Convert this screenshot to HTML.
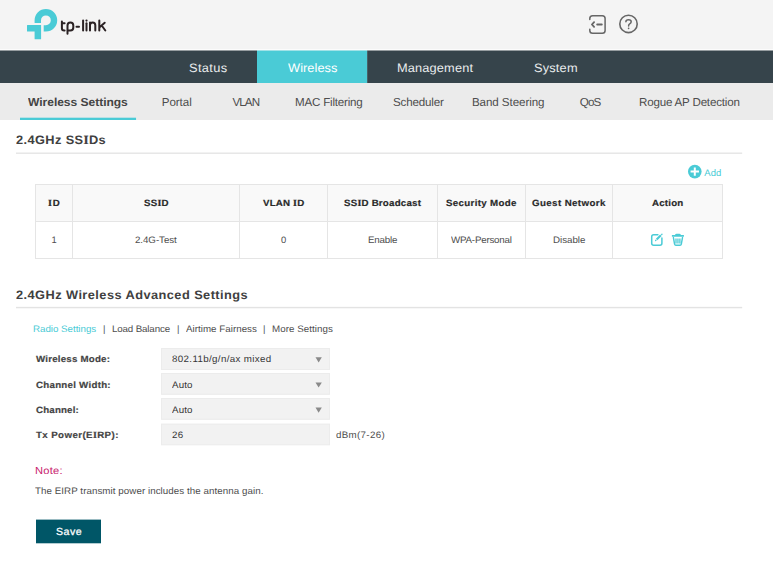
<!DOCTYPE html>
<html lang="en">
<head>
<meta charset="utf-8">
<title>tp-link</title>
<style>
html,body{margin:0;padding:0;}
body{width:773px;height:565px;position:relative;overflow:hidden;background:#fff;font-family:"Liberation Sans",sans-serif;text-rendering:geometricPrecision;}
.a{position:absolute;}
.t{position:absolute;white-space:nowrap;line-height:1;transform-origin:0 50%;}
.t i{font-style:normal;font-family:"Liberation Serif",serif;font-size:103%;-webkit-text-stroke:0.2px currentColor;}
#tbl{left:35px;top:184px;width:686px;height:73px;border:1px solid #e5e5e5;background:#fff;box-sizing:content-box;}
#thead{left:36px;top:185px;width:686px;height:36px;background:#f9f9f9;}
#trow{left:36px;top:221px;width:686px;height:1px;background:#e5e5e5;}
.vd{top:185px;width:1px;height:73px;background:#e5e5e5;}
</style>
</head>
<body>
<svg class="a" style="left:0;top:0" width="773" height="565" viewBox="0 0 773 565">
  <rect x="0" y="0" width="773" height="50.5" fill="#f4f4f4"/>
  <rect x="0" y="49.1" width="773" height="1" fill="#fdfdfd"/>
  <rect x="0" y="50.5" width="257" height="32.5" fill="#36444b"/>
  <rect x="367.1" y="50.5" width="405.9" height="32.5" fill="#36444b"/>
  <rect x="257" y="50.5" width="110.1" height="32.5" fill="#4acbd6"/>
  <rect x="0" y="83" width="773" height="37" fill="#ebebeb"/>
  <rect x="20" y="117.7" width="116.05" height="2.3" fill="#4acbd6"/>
  <rect x="16" y="152.55" width="726.2" height="1.3" fill="#e3e3e3"/>
  <rect x="16" y="306.85" width="726.2" height="1.45" fill="#e3e3e3"/>
  <g fill="#f2f2f2" stroke="#ececec" stroke-width="1">
    <rect x="161.5" y="348.5" width="168" height="21"/>
    <rect x="161.5" y="373.5" width="168" height="20.8"/>
    <rect x="161.5" y="398.5" width="168" height="20.8"/>
    <rect x="161.5" y="424.1" width="168" height="20.7"/>
  </g>
  <g fill="#8a8a8a">
    <path d="M315.5 357.2 H321.8 L318.65 362.4 Z"/>
    <path d="M315.5 382.4 H321.8 L318.65 387.6 Z"/>
    <path d="M315.5 407.6 H321.8 L318.65 412.8 Z"/>
  </g>
  <rect x="36" y="519.6" width="65" height="23.7" fill="#005667"/>
</svg>

<!-- logo mark -->
<svg class="a" style="left:0;top:0" width="120" height="50" viewBox="0 0 120 50">
  <g fill="#4acbd6">
    <path d="M34.6 22.9 V20.3 A11.3 11.3 0 1 1 45.9 31.6 H43.7 V25.2 H45.9 A4.9 4.9 0 1 0 41 20.3 V22.9 Z"/>
    <path d="M27.5 25.1 H41.1 V38.8 Q41.1 39.3 40.6 39.3 H35.1 Q34.6 39.3 34.6 38.8 V31.6 H27.5 Q27 31.6 27 31.1 V25.6 Q27 25.1 27.5 25.1 Z"/>
  </g>
  <g fill="none" stroke="#2b2224" stroke-width="2" stroke-linecap="round" stroke-linejoin="round">
    <path d="M61.9 21.6 V28.2 Q61.9 30.5 64.2 30.5 H64.6 M61.9 23.2 H64.6"/>
    <path d="M67.5 33.8 V25.5 Q67.5 22.5 70.4 22.5 Q73.3 22.5 73.3 25.5 V27.5 Q73.3 30.5 70.4 30.5 H67.8"/>
    <path d="M76.5 26.7 H79"/>
    <path d="M83.1 20.6 V30.5"/>
    <path d="M86.5 23.3 V30.5"/>
    <path d="M90 22.6 V30.5 M90 25.3 Q90 22.5 92.65 22.5 Q95.3 22.5 95.3 25.3 V30.5"/>
    <path d="M99.3 20.6 V30.5 M99.9 26.9 L104.7 22.7 M101.7 25.5 L105.3 30.5"/>
  </g>
  <circle cx="86.5" cy="20.6" r="1.1" fill="#2b2224"/>
</svg>

<!-- header icons -->
<svg class="a" style="left:580px;top:5px" width="70" height="40" viewBox="580 5 70 40" fill="none" stroke="#666" stroke-width="1.5" stroke-linecap="round" stroke-linejoin="round">
  <path d="M589.8 19.5 V18.6 Q589.8 15.8 592.6 15.8 H602.3 Q605.1 15.8 605.1 18.6 V30.5 Q605.1 33.3 602.3 33.3 H592.6 Q589.8 33.3 589.8 30.5 V29.3"/>
  <path d="M594.1 22.1 L591.9 24.5 L594.1 26.9" stroke-width="1.8"/>
  <path d="M597.2 24.5 H601.8" stroke-width="1.9"/>
  <circle cx="628.5" cy="23.9" r="8.7" stroke-width="1.6"/>
  <path d="M625.9 21.8 Q625.9 19.8 628.5 19.8 Q631.2 19.8 631.2 21.8 Q631.2 23 629.7 23.8 Q628.6 24.4 628.6 25.9" stroke-width="1.5"/>
  <circle cx="628.6" cy="28.3" r="0.85" fill="#666" stroke="none"/>
</svg>


<!-- table -->
<div class="a" id="tbl"></div>
<div class="a" id="thead"></div>
<div class="a" id="trow"></div>
<div class="a vd" style="left:72px"></div>
<div class="a vd" style="left:239px"></div>
<div class="a vd" style="left:327px"></div>
<div class="a vd" style="left:437px"></div>
<div class="a vd" style="left:525px"></div>
<div class="a vd" style="left:612.4px"></div>

<!-- add / action icons -->
<svg class="a" style="left:640px;top:160px" width="100" height="95" viewBox="640 160 100 95">
  <circle cx="694.8" cy="171.6" r="6.8" fill="#4acbd6"/>
  <path d="M690.6 171.6 H699 M694.8 167.4 V175.8" stroke="#fff" stroke-width="2" fill="none"/>
  <g fill="none" stroke="#4acbd6" stroke-width="1.4" stroke-linecap="round" stroke-linejoin="round">
    <path d="M657.9 234.7 H653.7 Q651.7 234.7 651.7 236.7 V243.2 Q651.7 245.2 653.7 245.2 H659.9 Q661.9 245.2 661.9 243.2 V238" stroke-width="1.5"/>
    <path d="M656.6 239.6 L660.9 235.3" stroke-width="2.1" stroke-linecap="butt"/>
    <path d="M655.6 240.6 L655.9 240.3 M661.7 234.5 L662 234.2" stroke-width="1.3"/>
    <path d="M673.4 237.6 L674.6 244.2 Q674.8 245.3 675.9 245.3 H680 Q681.1 245.3 681.3 244.2 L682.5 237.6" stroke-width="1.45"/>
    <path d="M676 238.6 V243.4 M677.95 238.6 V243.4 M679.9 238.6 V243.4" stroke-width="1.3" stroke-linecap="butt"/>
  </g>
  <path d="M671.9 235.1 H675 Q675.3 233.8 676.6 233.8 H679.3 Q680.6 233.8 680.9 235.1 H683.9 V236.8 H671.9 Z" fill="#4acbd6"/>
</svg>

<!-- form boxes -->


<span class="t" id="t0" style="left:188.99px;top:62.37px;font-size:12.2px;color:#e9eced;letter-spacing:0.339px;transform:scaleX(1.05);">Status</span>
<span class="t" id="t1" style="left:287.79px;top:62.37px;font-size:12.2px;color:#ffffff;letter-spacing:0.054px;transform:scaleX(1.05);">Wireless</span>
<span class="t" id="t2" style="left:397.49px;top:62.37px;font-size:12.2px;color:#e9eced;letter-spacing:0.134px;transform:scaleX(1.05);">Management</span>
<span class="t" id="t3" style="left:534.19px;top:62.37px;font-size:12.2px;color:#e9eced;letter-spacing:0.171px;transform:scaleX(1.05);">System</span>
<span class="t" id="t4" style="left:28.02px;top:97.18px;font-size:11.6px;color:#444;font-weight:700;letter-spacing:-0.035px;transform:scaleX(1.04);">Wireless Settings</span>
<span class="t" id="t5" style="left:161.74px;top:97.18px;font-size:11.6px;color:#4d4d4d;letter-spacing:-0.060px;">Portal</span>
<span class="t" id="t6" style="left:232.44px;top:97.18px;font-size:11.6px;color:#4d4d4d;letter-spacing:-0.900px;">VLAN</span>
<span class="t" id="t7" style="left:295.04px;top:97.18px;font-size:11.6px;color:#4d4d4d;letter-spacing:-0.212px;">MAC Filtering</span>
<span class="t" id="t8" style="left:393.04px;top:97.18px;font-size:11.6px;color:#4d4d4d;letter-spacing:-0.178px;">Scheduler</span>
<span class="t" id="t9" style="left:471.94px;top:97.18px;font-size:11.6px;color:#4d4d4d;letter-spacing:-0.074px;">Band Steering</span>
<span class="t" id="t10" style="left:579.74px;top:97.18px;font-size:11.6px;color:#4d4d4d;letter-spacing:-0.854px;">QoS</span>
<span class="t" id="t11" style="left:639.04px;top:97.18px;font-size:11.6px;color:#4d4d4d;letter-spacing:-0.200px;">Rogue AP Detection</span>
<span class="t" id="t12" style="left:16.09px;top:133.97px;font-size:12.2px;color:#404040;font-weight:700;letter-spacing:0.367px;transform:scaleX(1.05);">2.4GHz SS<i>I</i>Ds</span>
<span class="t" id="t13" style="left:704.22px;top:169.46px;font-size:9.5px;color:#4acbd6;letter-spacing:0.082px;">Add</span>
<span class="t" id="t14" style="left:48.41px;top:198.80px;font-size:9.1px;color:#2a2a2a;font-weight:700;letter-spacing:0.685px;transform:scaleX(1.07);-webkit-text-stroke:0.18px #2a2a2a;"><i>I</i>D</span>
<span class="t" id="t15" style="left:143.61px;top:198.80px;font-size:9.1px;color:#2a2a2a;font-weight:700;letter-spacing:0.231px;transform:scaleX(1.07);-webkit-text-stroke:0.18px #2a2a2a;">SS<i>I</i>D</span>
<span class="t" id="t16" style="left:262.91px;top:198.80px;font-size:9.1px;color:#2a2a2a;font-weight:700;letter-spacing:0.162px;transform:scaleX(1.07);-webkit-text-stroke:0.18px #2a2a2a;">VLAN <i>I</i>D</span>
<span class="t" id="t17" style="left:343.61px;top:198.80px;font-size:9.1px;color:#2a2a2a;font-weight:700;letter-spacing:0.191px;transform:scaleX(1.07);-webkit-text-stroke:0.18px #2a2a2a;">SS<i>I</i>D Broadcast</span>
<span class="t" id="t18" style="left:445.71px;top:198.80px;font-size:9.1px;color:#2a2a2a;font-weight:700;letter-spacing:0.310px;transform:scaleX(1.07);-webkit-text-stroke:0.18px #2a2a2a;">Security Mode</span>
<span class="t" id="t19" style="left:532.11px;top:198.80px;font-size:9.1px;color:#2a2a2a;font-weight:700;letter-spacing:0.366px;transform:scaleX(1.07);-webkit-text-stroke:0.18px #2a2a2a;">Guest Network</span>
<span class="t" id="t20" style="left:651.71px;top:198.80px;font-size:9.1px;color:#2a2a2a;font-weight:700;letter-spacing:0.188px;transform:scaleX(1.07);-webkit-text-stroke:0.18px #2a2a2a;">Action</span>
<span class="t" id="t21" style="left:51.59px;top:234.84px;font-size:9.4px;color:#4d4d4d;">1</span>
<span class="t" id="t22" style="left:135.31px;top:234.84px;font-size:9.4px;color:#4d4d4d;letter-spacing:-0.058px;transform:scaleX(1.04);">2.4G-Test</span>
<span class="t" id="t23" style="left:281.09px;top:234.84px;font-size:9.4px;color:#4d4d4d;">0</span>
<span class="t" id="t24" style="left:367.71px;top:234.84px;font-size:9.4px;color:#4d4d4d;letter-spacing:-0.170px;transform:scaleX(1.04);">Enable</span>
<span class="t" id="t25" style="left:450.61px;top:234.84px;font-size:9.4px;color:#4d4d4d;letter-spacing:-0.203px;transform:scaleX(1.04);">WPA-Personal</span>
<span class="t" id="t26" style="left:552.61px;top:234.84px;font-size:9.4px;color:#4d4d4d;letter-spacing:-0.021px;transform:scaleX(1.04);">Disable</span>
<span class="t" id="t27" style="left:16.09px;top:288.87px;font-size:12.2px;color:#404040;font-weight:700;letter-spacing:0.414px;transform:scaleX(1.05);">2.4GHz Wireless Advanced Settings</span>
<span class="t" id="t28" style="left:33.21px;top:324.04px;font-size:9.4px;color:#4acbd6;letter-spacing:-0.018px;transform:scaleX(1.04);">Radio Settings</span>
<span class="t" id="t29" style="left:103.08px;top:324.04px;font-size:9.4px;color:#4d4d4d;">|</span>
<span class="t" id="t30" style="left:112.11px;top:324.04px;font-size:9.4px;color:#4d4d4d;letter-spacing:-0.136px;transform:scaleX(1.04);">Load Balance</span>
<span class="t" id="t31" style="left:176.88px;top:324.04px;font-size:9.4px;color:#4d4d4d;">|</span>
<span class="t" id="t32" style="left:185.51px;top:324.04px;font-size:9.4px;color:#4d4d4d;letter-spacing:0.028px;transform:scaleX(1.04);">Airtime Fairness</span>
<span class="t" id="t33" style="left:263.08px;top:324.04px;font-size:9.4px;color:#4d4d4d;">|</span>
<span class="t" id="t34" style="left:272.11px;top:324.04px;font-size:9.4px;color:#4d4d4d;letter-spacing:0.058px;transform:scaleX(1.04);">More Settings</span>
<span class="t" id="t35" style="left:35.61px;top:354.60px;font-size:9.1px;color:#444;font-weight:700;letter-spacing:0.187px;transform:scaleX(1.07);-webkit-text-stroke:0.18px #444;">Wireless Mode:</span>
<span class="t" id="t36" style="left:35.61px;top:380.90px;font-size:9.1px;color:#444;font-weight:700;letter-spacing:0.238px;transform:scaleX(1.07);-webkit-text-stroke:0.18px #444;">Channel Width:</span>
<span class="t" id="t37" style="left:35.61px;top:406.20px;font-size:9.1px;color:#444;font-weight:700;letter-spacing:0.154px;transform:scaleX(1.07);-webkit-text-stroke:0.18px #444;">Channel:</span>
<span class="t" id="t38" style="left:35.61px;top:430.50px;font-size:9.1px;color:#444;font-weight:700;letter-spacing:0.365px;transform:scaleX(1.07);-webkit-text-stroke:0.18px #444;">Tx Power(E<i>I</i>RP):</span>
<span class="t" id="t39" style="left:171.51px;top:354.34px;font-size:9.4px;color:#363636;letter-spacing:0.343px;transform:scaleX(1.04);">802.11b/g/n/ax mixed</span>
<span class="t" id="t40" style="left:171.51px;top:379.64px;font-size:9.4px;color:#363636;letter-spacing:0.134px;transform:scaleX(1.04);">Auto</span>
<span class="t" id="t41" style="left:171.51px;top:404.94px;font-size:9.4px;color:#363636;letter-spacing:0.134px;transform:scaleX(1.04);">Auto</span>
<span class="t" id="t42" style="left:171.51px;top:430.24px;font-size:9.4px;color:#363636;letter-spacing:0.319px;transform:scaleX(1.04);">26</span>
<span class="t" id="t43" style="left:336.21px;top:430.24px;font-size:9.4px;color:#4d4d4d;letter-spacing:0.315px;transform:scaleX(1.04);">dBm(7-26)</span>
<span class="t" id="t44" style="left:35.26px;top:466.98px;font-size:10.3px;color:#c8206c;letter-spacing:0.225px;transform:scaleX(1.08);">Note:</span>
<span class="t" id="t45" style="left:35.31px;top:485.54px;font-size:9.4px;color:#4d4d4d;letter-spacing:0.061px;transform:scaleX(1.04);">The EIRP transmit power includes the antenna gain.</span>
<span class="t" id="t46" style="left:55.78px;top:528.28px;font-size:10.3px;color:#fff;letter-spacing:0.468px;transform:scaleX(1.03);-webkit-text-stroke:0.25px #fff;">Save</span>
</body>
</html>
